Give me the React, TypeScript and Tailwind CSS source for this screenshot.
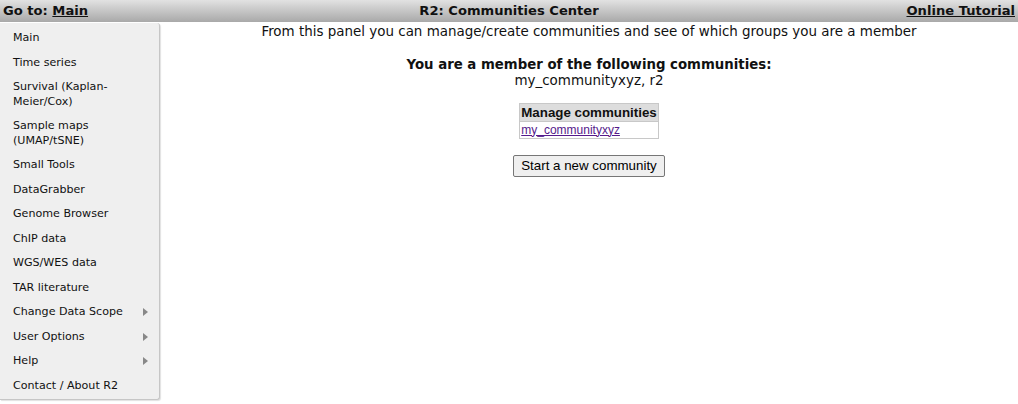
import React from "react";

const menu: { label: string[]; arrow?: boolean }[] = [
  { label: ["Main"] },
  { label: ["Time series"] },
  { label: ["Survival (Kaplan-", "Meier/Cox)"] },
  { label: ["Sample maps", "(UMAP/tSNE)"] },
  { label: ["Small Tools"] },
  { label: ["DataGrabber"] },
  { label: ["Genome Browser"] },
  { label: ["ChIP data"] },
  { label: ["WGS/WES data"] },
  { label: ["TAR literature"] },
  { label: ["Change Data Scope"], arrow: true },
  { label: ["User Options"], arrow: true },
  { label: ["Help"], arrow: true },
  { label: ["Contact / About R2"] },
];

export default function App() {
  return (
    <div className="w-[1018px] h-[404px] bg-white overflow-hidden" style={{ fontFamily: '"DejaVu Sans", Verdana, sans-serif' }}>
      <div className="h-[22px] bg-linear-to-b from-[#e2e2e2] to-[#a9a9a9] grid grid-cols-[1fr_auto_1fr] items-center px-[3px] text-[13.1px] font-bold text-[#111]">
        <div>
          Go to: <span className="underline">Main</span>
        </div>
        <div>R2: Communities Center</div>
        <div className="underline justify-self-end">Online Tutorial</div>
      </div>
      <div className="flex mt-[1px]">
        <div className="w-[160px] h-[377px] bg-[#efefef] border-r border-b border-[#c6c6c6] rounded-r-[3px] shadow-[1px_1px_1px_rgba(0,0,0,0.12)] pt-[3px] text-[11.1px] text-[#111] shrink-0">
          {menu.map((m, i) => (
            <div key={i} className="relative pl-[13px] py-[5px] leading-[14.5px]">
              {m.label.map((l, j) => (
                <div key={j}>{l}</div>
              ))}
              {m.arrow && (
                <div className="absolute left-[143px] top-[8px] w-0 h-0 border-y-[4px] border-y-transparent border-l-[5px] border-l-[#888]" />
              )}
            </div>
          ))}
        </div>
        <div className="flex-1 flex flex-col items-center text-[#111]">
          <div className="text-[13.45px] leading-[16px] mt-[1px]">
            From this panel you can manage/create communities and see of which groups you are a member
          </div>
          <div className="mt-[17px] text-[13.3px] font-bold leading-[16px]">You are a member of the following communities:</div>
          <div className="text-[13.45px] leading-[15px]">my_communityxyz, r2</div>
          <table className="mt-[15px] border border-[#c8c8c8] border-collapse" style={{ fontFamily: '"Liberation Sans", Arial, sans-serif' }}>
            <tbody>
              <tr>
                <th className="bg-[#dddddd] border border-[#c8c8c8] text-[13.33px] font-bold text-left px-[1px] h-[18px] leading-[16px] text-[#111]">
                  Manage communities
                </th>
              </tr>
              <tr>
                <td className="border border-[#c8c8c8] text-[12px] px-[1px] h-[17px] leading-[15px]">
                  <span className="underline text-[#551a8b]">my_communityxyz</span>
                </td>
              </tr>
            </tbody>
          </table>
          <button
            className="mt-[16px] h-[22px] px-[7px] bg-[#efefef] border border-[#767676] rounded-[2px] text-[13.33px] text-black leading-[18px]"
            style={{ fontFamily: '"Liberation Sans", Arial, sans-serif' }}
          >
            Start a new community
          </button>
        </div>
      </div>
    </div>
  );
}
